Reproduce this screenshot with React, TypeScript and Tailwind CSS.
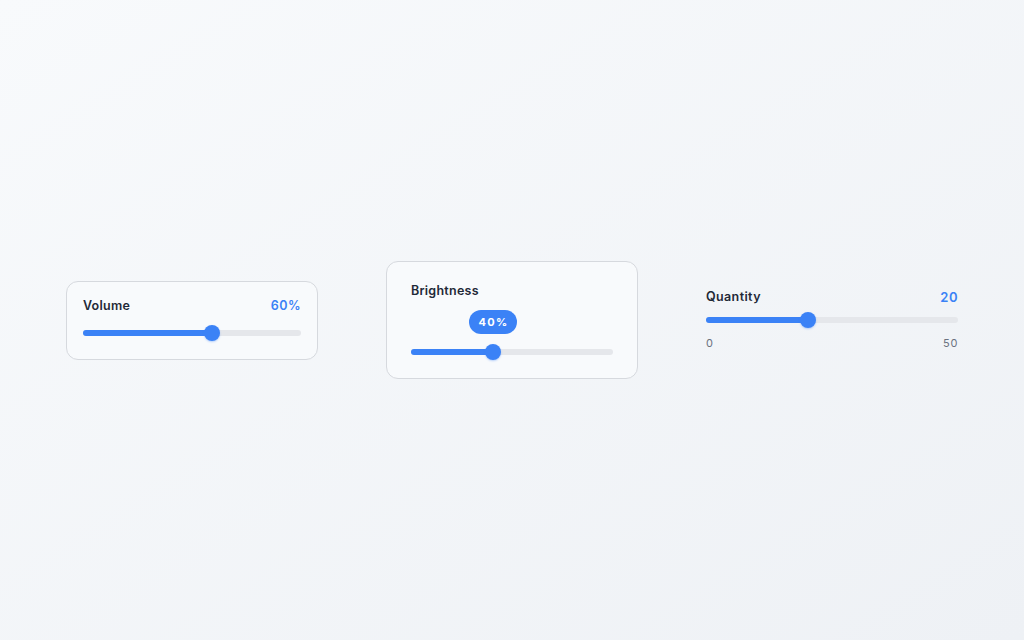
import React from 'react';

const FONT = { fontFamily: 'Inter, "Noto Sans", sans-serif' };

// thumb center sits like a native range input: inset by half the thumb
function thumbLeft(pct: number) {
    return `calc(${pct}% - ${(pct * 16) / 100}px + 8px)`;
}

function Track({ pct }: { pct: number }) {
    return (
        <div className="relative h-4 flex items-center">
            <div className="h-1.5 w-full rounded-full bg-[#e5e7eb]" />
            <div className="absolute left-0 h-1.5 rounded-full bg-[#3b82f6]" style={{ width: thumbLeft(pct) }} />
            <div
                className="absolute top-0 h-4 w-4 -translate-x-1/2 rounded-full bg-[#3b82f6] shadow-[0_1px_2px_rgba(59,130,246,0.35)]"
                style={{ left: thumbLeft(pct) }}
            />
        </div>
    );
}

function VolumeCard() {
    return (
        <div className="w-[252px] rounded-xl border border-[#d6d9de] bg-[#f8fafc] px-4 pt-4 pb-[18px]">
            <div className="flex items-center justify-between leading-4 mb-[11px]">
                <span className="text-[12.5px] font-semibold tracking-[0.02em] text-[#1f2937]">Volume</span>
                <span className="text-[12.5px] font-semibold tracking-[0.04em] text-[#3b82f6]">60%</span>
            </div>
            <Track pct={60} />
        </div>
    );
}

function BrightnessCard() {
    return (
        <div className="w-[252px] rounded-xl border border-[#d6d9de] bg-[#f8fafc] px-6 pt-[21px] pb-[18px]">
            <div className="text-[12.5px] font-semibold leading-4 tracking-[0.02em] text-[#1f2937]">Brightness</div>
            <div className="relative mt-[11px] h-6">
                <div
                    className="absolute top-0 flex h-6 w-12 -translate-x-1/2 items-center justify-center rounded-full bg-[#3b82f6] text-[11px] font-bold tracking-[0.12em] text-white"
                    style={{ left: thumbLeft(40) }}
                >
                    40%
                </div>
            </div>
            <div className="mt-2.5">
                <Track pct={40} />
            </div>
        </div>
    );
}

function QuantityControl() {
    return (
        <div className="w-[252px]">
            <div className="flex items-center justify-between leading-4 mb-[7px]">
                <span className="text-[12.5px] font-semibold tracking-[0.03em] text-[#1f2937]">Quantity</span>
                <span className="text-[13px] font-semibold tracking-[0.04em] text-[#3b82f6]">20</span>
            </div>
            <Track pct={40} />
            <div className="mt-[7px] flex justify-between text-[11px] leading-4 tracking-[0.06em] text-[#6b7280]">
                <span>0</span>
                <span>50</span>
            </div>
        </div>
    );
}

export default function App() {
    return (
        <div
            className="flex h-[640px] w-full items-center justify-center gap-[68px] bg-gradient-to-br from-[#f8fafc] to-[#eef1f5]"
            style={FONT}
        >
            <VolumeCard />
            <BrightnessCard />
            <QuantityControl />
        </div>
    );
}
